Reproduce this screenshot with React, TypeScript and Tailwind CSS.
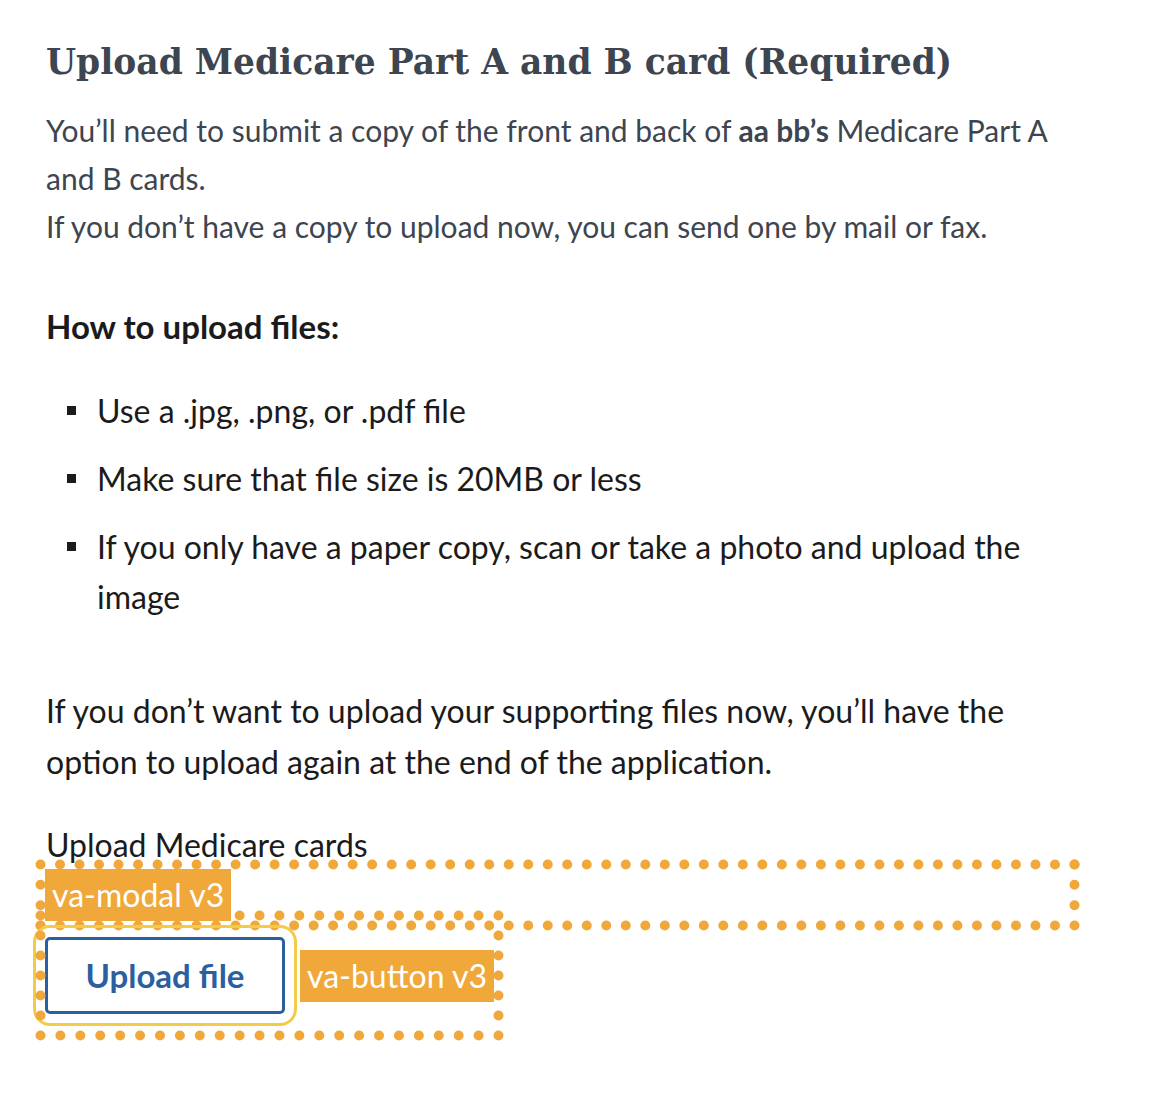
const SANS = "font-['Lato','Open_Sans',sans-serif]";

const FILE_RULES = [
  "Use a .jpg, .png, or .pdf file",
  "Make sure that file size is 20MB or less",
  "If you only have a paper copy, scan or take a photo and upload the image",
];

// dotted debug frame: round dots landing on every corner
function DotFrame({ w, h }: { w: number; h: number }) {
  const r = 4.5;
  const sides = [
    [r, r, w - r, r],
    [w - r, r, w - r, h - r],
    [w - r, h - r, r, h - r],
    [r, h - r, r, r],
  ];
  return (
    <svg className="pointer-events-none absolute inset-0 overflow-visible" width={w} height={h}>
      {sides.map(([x1, y1, x2, y2], i) => {
        const len = Math.hypot(x2 - x1, y2 - y1);
        return (
          <line
            key={i}
            x1={x1}
            y1={y1}
            x2={x2}
            y2={y2}
            pathLength={Math.max(1, Math.round(len / 19.5))}
            stroke="#f0a83b"
            strokeWidth="10"
            strokeLinecap="round"
            strokeDasharray="0 1"
          />
        );
      })}
    </svg>
  );
}

function Tag({ children }: { children: string }) {
  return (
    <span className="relative z-10 inline-flex h-[52px] items-center bg-[#f0a83b] px-[7px] text-[32px] leading-none text-white">
      {children}
    </span>
  );
}

export default function App() {
  return (
    <main className={`min-h-screen bg-white pl-[46px] pt-[36px] ${SANS}`}>
      <div className="w-[1024px]">
        <h1 className="font-['DejaVu_Serif',serif] text-[34.5px] font-bold leading-[52px] text-[#3d4551]">
          Upload Medicare Part A and B card (Required)
        </h1>

        <p className="mt-[18px] text-[30px] leading-[48px] text-[#3d4551]">
          You’ll need to submit a copy of the front and back of <strong className="font-bold">aa bb’s</strong> Medicare Part A and B cards.
          <br />
          If you don’t have a copy to upload now, you can send one by mail or fax.
        </p>

        <h2 className="mt-[52px] text-[33px] font-bold leading-[48px] text-[#1b1b1b]">
          How to upload files:
        </h2>

        <ul className="mt-[36px] text-[32px] leading-[50px] text-[#1b1b1b]">
          {FILE_RULES.map((rule) => (
            <li key={rule} className="mb-[18px] flex">
              <span className="mt-[20px] ml-[21px] mr-[21px] h-[9px] w-[9px] shrink-0 bg-[#1b1b1b]" />
              <span>{rule}</span>
            </li>
          ))}
        </ul>

        <p className="mt-[63px] text-[32px] leading-[51px] text-[#1b1b1b]">
          If you don’t want to upload your supporting files now, you’ll have the option to upload again at the end of the application.
        </p>

        <div className="mt-[43px] text-[32px] leading-[30px] text-[#1b1b1b]">Upload Medicare cards</div>

        <div className="relative -ml-[10px] h-[70px] w-[1043px] p-[9px]">
          <DotFrame w={1043} h={70} />
          <Tag>va-modal v3</Tag>
        </div>

        <div className="relative -mt-[19px] -ml-[10px] flex h-[129px] w-[467px] items-center justify-between p-[9px]">
          <DotFrame w={467} h={129} />
          <button className="flex h-[77px] w-[240px] items-center justify-center rounded-[5px] border-[3px] border-[#2c5f9f] bg-white text-[33px] font-bold text-[#2c5f9f] outline-[3px] outline-offset-[9px] outline-[#f3cb46] outline-solid">
            Upload file
          </button>
          <Tag>va-button v3</Tag>
        </div>
      </div>
    </main>
  );
}
